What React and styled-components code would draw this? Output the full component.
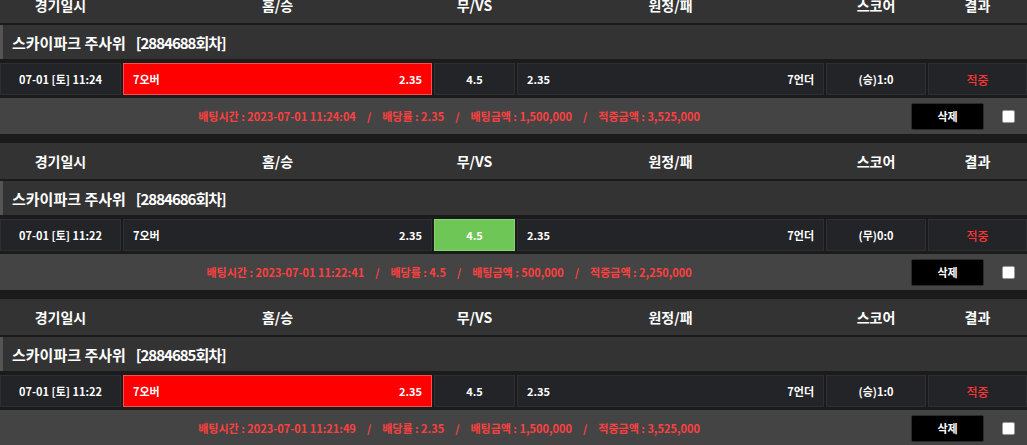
import React from 'react';
import styled, { createGlobalStyle } from 'styled-components';

const GlobalStyle = createGlobalStyle`
  html, body {
    margin: 0;
    padding: 0;
    background: #1b1b1b;
    overflow: hidden;
  }
  body {
    font-family: 'Noto Sans CJK KR', 'Noto Sans', sans-serif;
    color: #fff;
  }
`;

const columns = '121px 309px 81px 307px 100px 1fr';

const List = styled.div`
  margin-top: -13px;
  display: flex;
  flex-direction: column;
`;

const Block = styled.div`
  display: flex;
  flex-direction: column;
  margin-bottom: 9px;
`;

const HeaderRow = styled.div`
  display: grid;
  grid-template-columns: ${columns};
  column-gap: 2px;
  height: 36px;
  background: #333;
  align-items: center;
  font-size: 14px;
  font-weight: 700;
  text-align: center;
`;

const TitleRow = styled.div`
  margin-top: 2px;
  height: 34px;
  background: #333;
  border-left: 3px solid #555;
  display: flex;
  align-items: center;
  padding-left: 9px;
  font-size: 15px;
  font-weight: 700;
`;

const Round = styled.span`
  margin-left: 10px;
  letter-spacing: -1px;
`;

const GameRow = styled.div`
  margin-top: 4px;
  display: grid;
  grid-template-columns: ${columns};
  column-gap: 2px;
  height: 32px;
  font-size: 11px;
  font-weight: 700;
`;

const Cell = styled.div`
  box-sizing: border-box;
  background: ${p => (p.$tone === 'red' ? '#ff0000' : p.$tone === 'green' ? '#6dc655' : '#232427')};
  border: 1px solid ${p => (p.$tone === 'red' ? '#ff4d4d' : p.$tone === 'green' ? '#86d470' : '#2e2f33')};
  display: flex;
  align-items: center;
  justify-content: ${p => (p.$split ? 'space-between' : 'center')};
  padding: 0 ${p => (p.$split ? '9px' : '0')};
  color: ${p => (p.$hit ? '#ff3535' : '#fff')};
  font-weight: ${p => (p.$hit ? 500 : 700)};
  font-size: ${p => (p.$hit ? '12px' : '11px')};
`;

const InfoRow = styled.div`
  margin-top: 3px;
  height: 36px;
  background: #444;
  display: flex;
  align-items: center;
  padding-right: 12px;
`;

const InfoText = styled.div`
  width: 900px;
  text-align: center;
  font-size: 11px;
  font-weight: 700;
  color: #ff4040;
  white-space: nowrap;
`;

const Slash = styled.span`
  margin: 0 11px;
`;

const DeleteButton = styled.button`
  margin-left: 13px;
  width: 73px;
  height: 27px;
  background: #000;
  border: 1px solid #2a2a2a;
  border-radius: 2px;
  color: #fff;
  font-family: inherit;
  font-size: 11px;
  font-weight: 700;
  cursor: pointer;
`;

const Check = styled.span`
  margin-left: 18px;
  width: 11px;
  height: 11px;
  background: #fff;
  border: 1px solid #999;
  border-radius: 2px;
`;

const bets = [
  {
    round: '2884688',
    date: '07-01 [토] 11:24',
    pick: 'home',
    draw: '4.5',
    score: '(승)1:0',
    time: '2023-07-01 11:24:04',
    rate: '2.35',
    amount: '1,500,000',
    win: '3,525,000'
  },
  {
    round: '2884686',
    date: '07-01 [토] 11:22',
    pick: 'draw',
    draw: '4.5',
    score: '(무)0:0',
    time: '2023-07-01 11:22:41',
    rate: '4.5',
    amount: '500,000',
    win: '2,250,000'
  },
  {
    round: '2884685',
    date: '07-01 [토] 11:22',
    pick: 'home',
    draw: '4.5',
    score: '(승)1:0',
    time: '2023-07-01 11:21:49',
    rate: '2.35',
    amount: '1,500,000',
    win: '3,525,000'
  }
];

function BetBlock({ bet }) {
  return (
    <Block>
      <HeaderRow>
        <span>경기일시</span>
        <span>홈/승</span>
        <span>무/VS</span>
        <span>원정/패</span>
        <span>스코어</span>
        <span>결과</span>
      </HeaderRow>
      <TitleRow>
        스카이파크 주사위
        <Round>[{bet.round}회차]</Round>
      </TitleRow>
      <GameRow>
        <Cell>{bet.date}</Cell>
        <Cell $split $tone={bet.pick === 'home' ? 'red' : undefined}>
          <span>7오버</span>
          <span>2.35</span>
        </Cell>
        <Cell $tone={bet.pick === 'draw' ? 'green' : undefined}>{bet.draw}</Cell>
        <Cell $split>
          <span>2.35</span>
          <span>7언더</span>
        </Cell>
        <Cell>{bet.score}</Cell>
        <Cell $hit>적중</Cell>
      </GameRow>
      <InfoRow>
        <InfoText>
          배팅시간 : {bet.time}
          <Slash>/</Slash>
          배당률 : {bet.rate}
          <Slash>/</Slash>
          배팅금액 : {bet.amount}
          <Slash>/</Slash>
          적중금액 : {bet.win}
        </InfoText>
        <DeleteButton>삭제</DeleteButton>
        <Check />
      </InfoRow>
    </Block>
  );
}

export default function App() {
  return (
    <>
      <GlobalStyle />
      <List>
        {bets.map(bet => (
          <BetBlock key={bet.round} bet={bet} />
        ))}
      </List>
    </>
  );
}
